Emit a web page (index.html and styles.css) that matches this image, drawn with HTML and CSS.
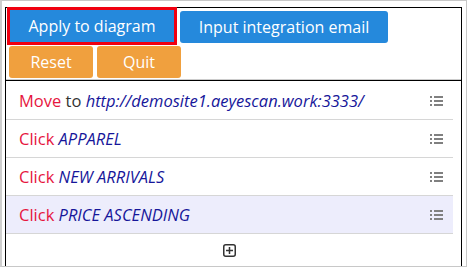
FILE: index.html
```html
<!DOCTYPE html>
<html lang="en">
<head>
    <meta charset="UTF-8">
    <title>Scenario steps</title>
    <link rel="stylesheet" href="styles.css">
</head>
<body>
    <div class="frame">
        <div class="panel">
            <div class="toolbar">
                <button class="btn btn-blue btn-apply">Apply to diagram</button>
                <button class="btn btn-blue btn-input">Input integration email</button>
                <button class="btn btn-orange">Reset</button>
                <button class="btn btn-orange">Quit</button>
            </div>

            <div class="steps">
                <div class="step">
                    <span class="text"><span class="verb">Move</span> to <em>http://demosite1.aeyescan.work:3333/</em></span>
                    <svg class="handle" viewBox="0 0 13 10"><rect x="0" y="0" width="2" height="2"/><rect x="4" y="0" width="9" height="2"/><rect x="0" y="4" width="2" height="2"/><rect x="4" y="4" width="9" height="2"/><rect x="0" y="8" width="2" height="2"/><rect x="4" y="8" width="9" height="2"/></svg>
                </div>
                <div class="step">
                    <span class="text"><span class="verb">Click</span> <em>APPAREL</em></span>
                    <svg class="handle" viewBox="0 0 13 10"><rect x="0" y="0" width="2" height="2"/><rect x="4" y="0" width="9" height="2"/><rect x="0" y="4" width="2" height="2"/><rect x="4" y="4" width="9" height="2"/><rect x="0" y="8" width="2" height="2"/><rect x="4" y="8" width="9" height="2"/></svg>
                </div>
                <div class="step">
                    <span class="text"><span class="verb">Click</span> <em>NEW ARRIVALS</em></span>
                    <svg class="handle" viewBox="0 0 13 10"><rect x="0" y="0" width="2" height="2"/><rect x="4" y="0" width="9" height="2"/><rect x="0" y="4" width="2" height="2"/><rect x="4" y="4" width="9" height="2"/><rect x="0" y="8" width="2" height="2"/><rect x="4" y="8" width="9" height="2"/></svg>
                </div>
                <div class="step selected">
                    <span class="text"><span class="verb">Click</span> <em>PRICE ASCENDING</em></span>
                    <svg class="handle" viewBox="0 0 13 10"><rect x="0" y="0" width="2" height="2"/><rect x="4" y="0" width="9" height="2"/><rect x="0" y="4" width="2" height="2"/><rect x="4" y="4" width="9" height="2"/><rect x="0" y="8" width="2" height="2"/><rect x="4" y="8" width="9" height="2"/></svg>
                </div>
                <div class="add">
                    <svg class="add-icon" viewBox="0 0 13 13"><rect x="0.75" y="0.75" width="11.5" height="11.5" rx="2" fill="none" stroke="#333" stroke-width="1.5"/><path d="M6.5 3v7M3 6.5h7" stroke="#333" stroke-width="1.5"/></svg>
                </div>
            </div>
        </div>
    </div>
</body>
</html>
```

FILE: styles.css
```css
* {
    box-sizing: border-box;
}
body {
    margin: 0;
    font-family: 'Open Sans', 'Noto Sans', sans-serif;
    background: white;
}
.frame {
    width: 467px;
    height: 267px;
    border: 1px solid #c8c8c8;
    border-left: 2px solid #cfcfcf;
    padding: 6px 4px 0 3px;
    overflow: hidden;
}
.panel {
    border: 1px solid #000;
    border-bottom: none;
    height: 100%;
}
.toolbar {
    display: flex;
    flex-wrap: wrap;
    align-items: flex-start;
    padding: 2px 0 0 1px;
    border-bottom: 1px solid #cccccc;
}
.btn {
    height: 32px;
    border: none;
    border-radius: 3px;
    color: white;
    font-family: inherit;
    font-size: 16px;
    padding: 0;
    cursor: pointer;
}
.btn-blue {
    background: #2589dc;
}
.btn-orange {
    background: #f0a03e;
    width: 84px;
    margin: 2px 2px 1px 2px;
}
.btn-apply {
    width: 164px;
    margin: 0 4px 0 3px;
    border-radius: 0;
    outline: 3px solid #f00010;
}
.btn-input {
    width: 208px;
    margin: 1px 2px 1px 2px;
}
.steps {
    border-top: 1px solid #000;
    padding-top: 1px;
}
.step {
    display: flex;
    align-items: center;
    justify-content: space-between;
    height: 38px;
    margin-right: 8px;
    padding: 0 10px 0 13px;
    border-bottom: 1px solid #d6d6d6;
    font-size: 16.5px;
    color: #333;
}
.step.selected {
    background: #ededfc;
}
.verb {
    color: #e6163e;
}
.step em {
    color: #16169a;
}
.handle {
    width: 13px;
    height: 10px;
    fill: #808080;
}
.add {
    display: flex;
    justify-content: center;
    margin-right: 8px;
    padding-top: 10px;
}
.add-icon {
    width: 13px;
    height: 13px;
}
```
